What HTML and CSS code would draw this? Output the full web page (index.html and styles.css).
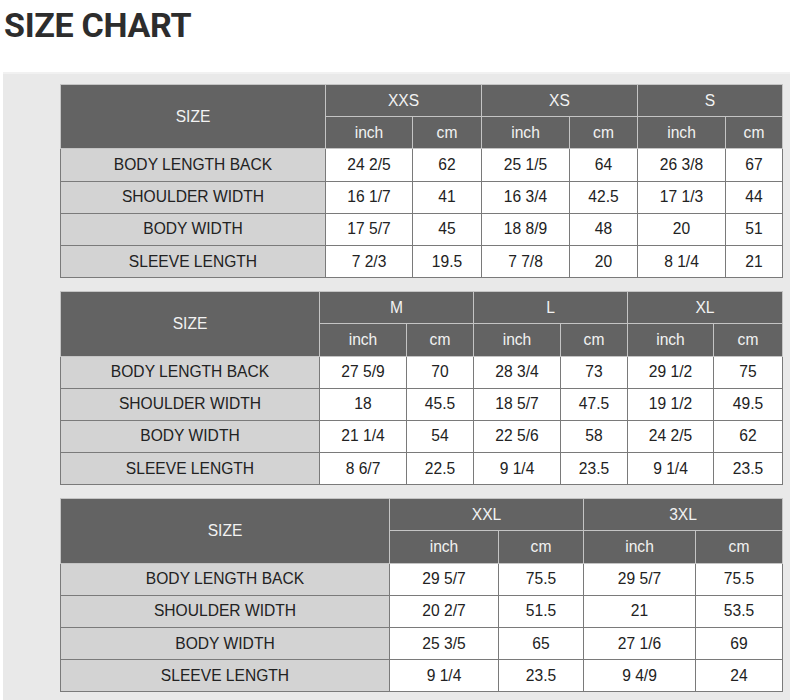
FILE: index.html
```html
<!DOCTYPE html>
<html>
<head>
<meta charset="utf-8">
<link rel="stylesheet" href="styles.css">
</head>
<body>
<h1 class="title">SIZE CHART</h1>
<div class="panel">
  <table class="chart">
    <colgroup><col style="width:265px"><col style="width:87px"><col style="width:69px"><col style="width:88px"><col style="width:68px"><col style="width:88px"><col style="width:57px"></colgroup>
    <tr class="h"><th rowspan="2">SIZE</th><th colspan="2">XXS</th><th colspan="2">XS</th><th colspan="2">S</th></tr>
    <tr class="h"><th>inch</th><th>cm</th><th>inch</th><th>cm</th><th>inch</th><th>cm</th></tr>
    <tr><td class="lbl">BODY LENGTH BACK</td><td>24 2/5</td><td>62</td><td>25 1/5</td><td>64</td><td>26 3/8</td><td>67</td></tr>
    <tr><td class="lbl">SHOULDER WIDTH</td><td>16 1/7</td><td>41</td><td>16 3/4</td><td>42.5</td><td>17 1/3</td><td>44</td></tr>
    <tr><td class="lbl">BODY WIDTH</td><td>17 5/7</td><td>45</td><td>18 8/9</td><td>48</td><td>20</td><td>51</td></tr>
    <tr><td class="lbl">SLEEVE LENGTH</td><td>7 2/3</td><td>19.5</td><td>7 7/8</td><td>20</td><td>8 1/4</td><td>21</td></tr>
  </table>
  <table class="chart">
    <colgroup><col style="width:259px"><col style="width:87px"><col style="width:67px"><col style="width:87px"><col style="width:67px"><col style="width:86px"><col style="width:69px"></colgroup>
    <tr class="h"><th rowspan="2">SIZE</th><th colspan="2">M</th><th colspan="2">L</th><th colspan="2">XL</th></tr>
    <tr class="h"><th>inch</th><th>cm</th><th>inch</th><th>cm</th><th>inch</th><th>cm</th></tr>
    <tr><td class="lbl">BODY LENGTH BACK</td><td>27 5/9</td><td>70</td><td>28 3/4</td><td>73</td><td>29 1/2</td><td>75</td></tr>
    <tr><td class="lbl">SHOULDER WIDTH</td><td>18</td><td>45.5</td><td>18 5/7</td><td>47.5</td><td>19 1/2</td><td>49.5</td></tr>
    <tr><td class="lbl">BODY WIDTH</td><td>21 1/4</td><td>54</td><td>22 5/6</td><td>58</td><td>24 2/5</td><td>62</td></tr>
    <tr><td class="lbl">SLEEVE LENGTH</td><td>8 6/7</td><td>22.5</td><td>9 1/4</td><td>23.5</td><td>9 1/4</td><td>23.5</td></tr>
  </table>
  <table class="chart">
    <colgroup><col style="width:329px"><col style="width:109px"><col style="width:85px"><col style="width:112px"><col style="width:87px"></colgroup>
    <tr class="h"><th rowspan="2">SIZE</th><th colspan="2">XXL</th><th colspan="2">3XL</th></tr>
    <tr class="h"><th>inch</th><th>cm</th><th>inch</th><th>cm</th></tr>
    <tr><td class="lbl">BODY LENGTH BACK</td><td>29 5/7</td><td>75.5</td><td>29 5/7</td><td>75.5</td></tr>
    <tr><td class="lbl">SHOULDER WIDTH</td><td>20 2/7</td><td>51.5</td><td>21</td><td>53.5</td></tr>
    <tr><td class="lbl">BODY WIDTH</td><td>25 3/5</td><td>65</td><td>27 1/6</td><td>69</td></tr>
    <tr><td class="lbl">SLEEVE LENGTH</td><td>9 1/4</td><td>23.5</td><td>9 4/9</td><td>24</td></tr>
  </table>
</div>
</body>
</html>
```
FILE: styles.css
```css
html, body {
  margin: 0;
  padding: 0;
  background: #ffffff;
}
body {
  font-family: "Liberation Sans", Arial, sans-serif;
  overflow: hidden;
}
.title {
  margin: 0;
  padding: 5px 0 0 4px;
  height: 72px;
  box-sizing: border-box;
  font-family: Roboto, "Liberation Sans", sans-serif;
  font-weight: 700;
  font-size: 34px;
  line-height: 40px;
  color: #2d2d2d;
  letter-spacing: -0.3px;
}
.panel {
  margin-left: 3px;
  background: #e9e9e9;
  border-top: 2px solid #f1f1f1;
  padding: 10px 0 20px 57px;
  display: flex;
  flex-direction: column;
  gap: 13px;
}
.chart {
  border-collapse: collapse;
  table-layout: fixed;
  width: 722px;
  border: 1px solid #6a6a6a;
}
.chart tr {
  height: 32.2px;
}
.chart th {
  background: #636363;
  color: #f2f2f2;
  font-weight: 400;
  font-size: 15.6px;
  border: 1px solid #c4c4c4;
  padding: 0;
  text-align: center;
}
.chart td {
  background: #ffffff;
  color: #222222;
  font-size: 15.6px;
  border: 1px solid #7a7a7a;
  padding: 0;
  text-align: center;
}
.chart td.lbl {
  background: #d3d3d3;
}
```
